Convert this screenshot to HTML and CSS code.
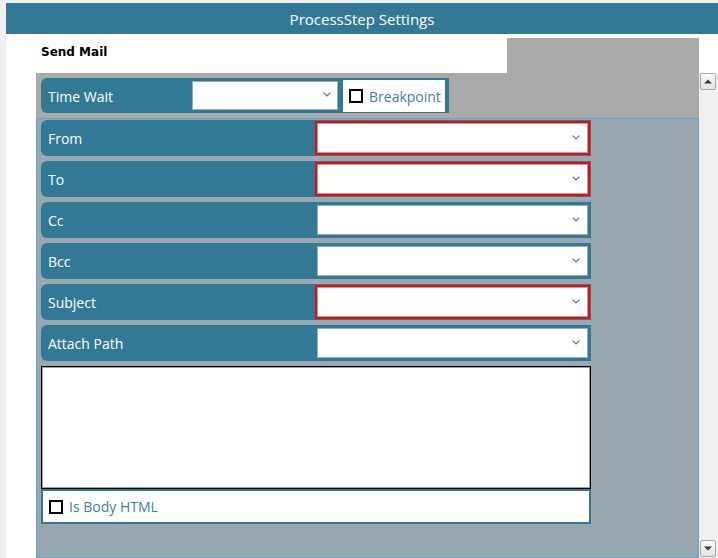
FILE: index.html
```html
<!DOCTYPE html>
<html>
<head>
<meta charset="utf-8">
<link rel="stylesheet" href="styles.css">
</head>
<body>
<div class="window">
  <div class="titlebar">ProcessStep Settings</div>
  <div class="content">
    <div class="header">
      <div class="header-title">Send Mail</div>
      <div class="header-fill"></div>
    </div>
    <div class="scroll-row">
      <div class="gutter"></div>
      <div class="main">
        <div class="top-band">
          <div class="row-time">
            <span class="label label-time">Time Wait</span>
            <div class="combo combo-small">
              <svg class="chev" width="8" height="5" viewBox="0 0 8 5"><path d="M0.6 0.6 L4 4 L7.4 0.6" stroke="#6e6e6e" stroke-width="1.2" fill="none"/></svg>
            </div>
            <div class="check-box"><span class="check"></span><span class="check-text">Breakpoint</span></div>
          </div>
        </div>
        <div class="panel">
          <div class="rows">
            <div class="row"><span class="label">From</span><div class="combo-wrap required"><div class="combo"><svg class="chev" width="8" height="5" viewBox="0 0 8 5"><path d="M0.6 0.6 L4 4 L7.4 0.6" stroke="#6e6e6e" stroke-width="1.2" fill="none"/></svg></div></div></div>
            <div class="row"><span class="label">To</span><div class="combo-wrap required"><div class="combo"><svg class="chev" width="8" height="5" viewBox="0 0 8 5"><path d="M0.6 0.6 L4 4 L7.4 0.6" stroke="#6e6e6e" stroke-width="1.2" fill="none"/></svg></div></div></div>
            <div class="row"><span class="label">Cc</span><div class="combo-wrap"><div class="combo"><svg class="chev" width="8" height="5" viewBox="0 0 8 5"><path d="M0.6 0.6 L4 4 L7.4 0.6" stroke="#6e6e6e" stroke-width="1.2" fill="none"/></svg></div></div></div>
            <div class="row"><span class="label">Bcc</span><div class="combo-wrap"><div class="combo"><svg class="chev" width="8" height="5" viewBox="0 0 8 5"><path d="M0.6 0.6 L4 4 L7.4 0.6" stroke="#6e6e6e" stroke-width="1.2" fill="none"/></svg></div></div></div>
            <div class="row"><span class="label">Subject</span><div class="combo-wrap required"><div class="combo"><svg class="chev" width="8" height="5" viewBox="0 0 8 5"><path d="M0.6 0.6 L4 4 L7.4 0.6" stroke="#6e6e6e" stroke-width="1.2" fill="none"/></svg></div></div></div>
            <div class="row"><span class="label">Attach Path</span><div class="combo-wrap"><div class="combo"><svg class="chev" width="8" height="5" viewBox="0 0 8 5"><path d="M0.6 0.6 L4 4 L7.4 0.6" stroke="#6e6e6e" stroke-width="1.2" fill="none"/></svg></div></div></div>
          </div>
          <div class="body-text"></div>
          <div class="html-box"><span class="check"></span><span class="check-text">Is Body HTML</span></div>
        </div>
      </div>
      <div class="scrollbar">
        <div class="sb-btn"><svg width="8" height="5" viewBox="0 0 8 5"><path d="M0 4.5 L4 0.5 L8 4.5 Z" fill="#3a3a3a"/></svg></div>
        <div class="sb-track"></div>
        <div class="sb-btn"><svg width="8" height="5" viewBox="0 0 8 5"><path d="M0 0.5 L4 4.5 L8 0.5 Z" fill="#3a3a3a"/></svg></div>
      </div>
    </div>
  </div>
</div>
</body>
</html>
```

FILE: styles.css
```css
* { box-sizing: border-box; }
html, body { margin: 0; padding: 0; }
body {
  background: #f0f0f0;
  width: 718px;
  height: 558px;
  overflow: hidden;
  font-family: "Open Sans", "Noto Sans", sans-serif;
}
.window {
  margin: 3px 0 0 6px;
  width: 712px;
  height: 555px;
  background: #ffffff;
  display: flex;
  flex-direction: column;
}
.titlebar {
  height: 31px;
  background: #327996;
  color: #ffffff;
  font-size: 15px;
  display: flex;
  align-items: center;
  justify-content: center;
}
.content {
  flex: 1;
  display: flex;
  flex-direction: column;
}
.header {
  height: 39px;
  display: flex;
}
.header-title {
  width: 501px;
  padding: 11px 0 0 35px;
  font-family: "DejaVu Sans", Verdana, sans-serif;
  font-weight: bold;
  font-size: 12px;
  line-height: 14px;
  color: #000;
}
.header-fill {
  width: 192px;
  margin-top: 4px;
  background: #aaaaaa;
}
.scroll-row {
  flex: 1;
  display: flex;
}
.gutter { width: 30px; }
.main {
  width: 663px;
  display: flex;
  flex-direction: column;
}
.top-band {
  height: 45px;
  background: #aaaaaa;
  padding: 5px 0 0 5px;
}
.row-time {
  width: 408px;
  height: 35px;
  background: #327996;
  border-radius: 6px 0 0 6px;
  display: flex;
  align-items: center;
  padding: 2px 2px 1px 7px;
}
.label {
  color: #ffffff;
  font-size: 14px;
  flex: 1;
}
.label-time { flex: none; width: 144px; }
.combo {
  background: #ffffff;
  border: 1px solid #a6a6a6;
  height: 100%;
  display: flex;
  align-items: center;
  justify-content: flex-end;
  padding-right: 7px;
}
.chev { display: block; margin-top: -2px; }
.combo-small {
  width: 146px;
  height: 29px;
  margin-top: -1px;
  padding-right: 6px;
}
.check-box {
  margin-left: 5px;
  align-self: stretch;
  width: 102px;
  background: #ffffff;
  display: flex;
  align-items: center;
  padding-left: 6px;
}
.check {
  width: 14px;
  height: 14px;
  border: 2px solid #000;
  background: #fff;
  flex: none;
}
.check-text {
  margin-left: 6px;
  color: #3f80ab;
  font-size: 14px;
}
.panel {
  flex: 1;
  background: #99a8af;
  border: 1px solid #5aa7d6;
  padding: 1px 0 0 4px;
  display: flex;
  flex-direction: column;
}
.rows {
  display: flex;
  flex-direction: column;
  gap: 5px;
}
.row {
  width: 550px;
  height: 36px;
  background: #327996;
  border-radius: 6px 0 0 6px;
  display: flex;
  align-items: center;
  padding: 1px 1px 1px 7px;
}
.combo-wrap {
  width: 275px;
  height: 34px;
  border: 2px solid transparent;
}
.combo-wrap.required { border-color: #ff0000; }
.body-text {
  margin-top: 5px;
  width: 550px;
  height: 123px;
  background: #ffffff;
  border: 1px solid #000;
  box-shadow: inset 1px 1px 0 #a0a0a0, inset -1px -1px 0 #a0a0a0;
}
.html-box {
  width: 550px;
  height: 35px;
  background: #ffffff;
  border: 2px solid #327996;
  display: flex;
  align-items: center;
  padding-left: 6px;
}
.scrollbar {
  width: 19px;
  display: flex;
  flex-direction: column;
  background: #f0f0f0;
  padding: 0 2px 1px 1px;
}
.sb-track { flex: 1; }
.sb-btn {
  height: 17px;
  border: 1px solid #a9a9a9;
  border-radius: 2px;
  background: linear-gradient(#fbfbfb, #e3e3e3);
  display: flex;
  align-items: center;
  justify-content: center;
}
```
